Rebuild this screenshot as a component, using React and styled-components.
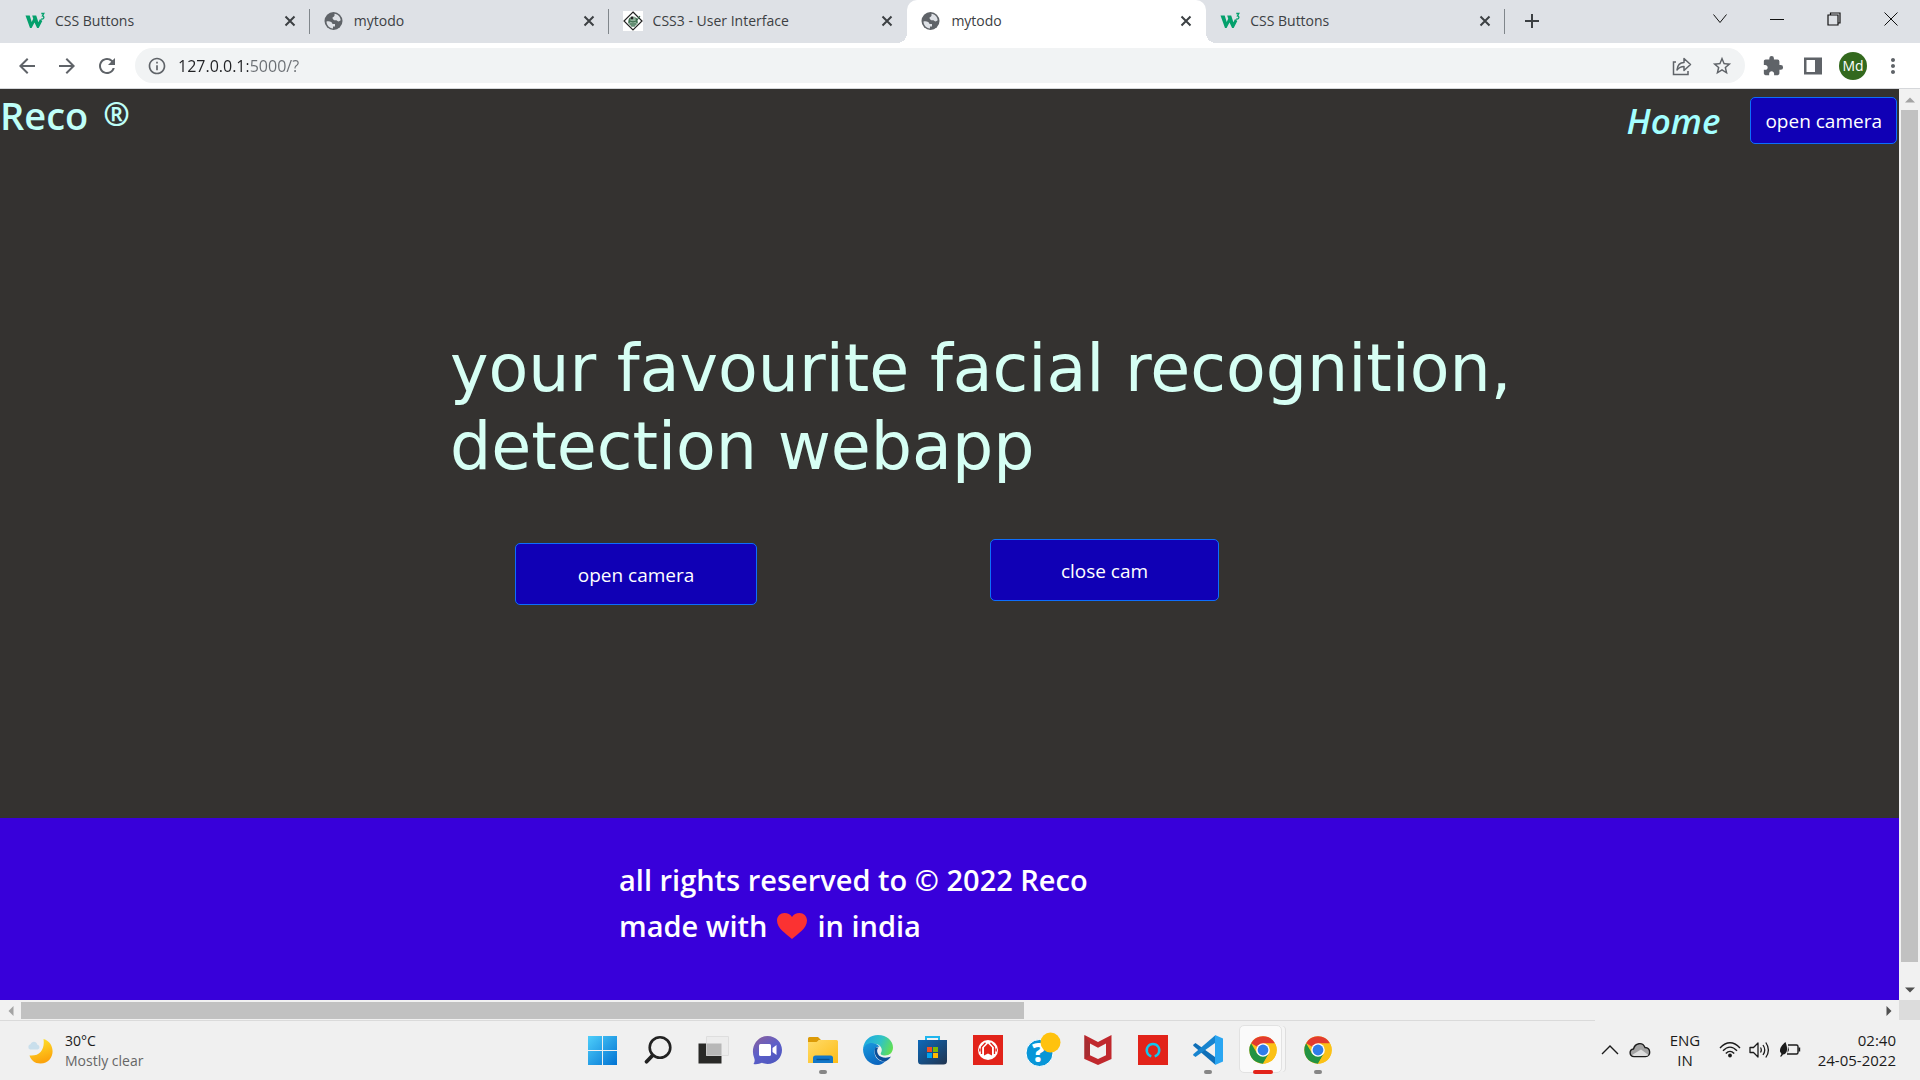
import React from "react";
import styled, { createGlobalStyle, css } from "styled-components";
import {
  MdArrowBack,
  MdArrowForward,
  MdRefresh,
  MdInfoOutline,
  MdStarBorder,
  MdExtension,
  MdMoreVert,
} from "react-icons/md";

const GlobalStyle = createGlobalStyle`
  *, *::before, *::after { box-sizing: border-box; }
  body { margin: 0; font-family: "Open Sans", "Noto Sans", sans-serif; }
  button, input { font: inherit; }
  svg { display: block; flex: none; }
`;

const Screen = styled.div`
  min-height: 100vh;
  display: flex;
  flex-direction: column;
  background: #fff;
`;

const iconButton = css`
  display: flex;
  align-items: center;
  justify-content: center;
  padding: 0;
  border: 0;
  background: transparent;
  color: inherit;
`;

/* ---------- tab strip ---------- */

const TabStrip = styled.header`
  display: flex;
  height: 43px;
  background: #dee1e6;
  color: #3c4043;
`;

const TabList = styled.div`
  display: flex;
  flex: 0 1 1505px;
  padding-left: 11px;
`;

const Tab = styled.div`
  position: relative;
  flex: 1 1 0;
  min-width: 0;
  display: flex;
  align-items: center;
  gap: 10px;
  padding: 0 10px 2px 14px;
  background: ${(p) => (p.$active ? "#fff" : "transparent")};
  border-radius: 10px 10px 0 0;

  ${(p) =>
    p.$divider &&
    css`
      &::after {
        content: "";
        position: absolute;
        right: 0;
        top: 9px;
        width: 1px;
        height: 25px;
        background: #80868b;
      }
    `}

  ${(p) =>
    p.$active &&
    css`
      &::before,
      &::after {
        content: "";
        position: absolute;
        bottom: 0;
        width: 10px;
        height: 10px;
      }
      &::before {
        left: -10px;
        background: radial-gradient(circle at 0 0, transparent 10px, #fff 10px);
      }
      &::after {
        right: -10px;
        background: radial-gradient(circle at 100% 0, transparent 10px, #fff 10px);
      }
    `}
`;

const TabTitle = styled.span`
  flex: 1;
  overflow: hidden;
  white-space: nowrap;
  font-size: 14px;
  line-height: 20px;
`;

const TabClose = styled.button`
  ${iconButton}
  width: 20px;
  height: 20px;
`;

const NewTab = styled.button`
  ${iconButton}
  width: 54px;
  height: 42px;
`;

const WindowControls = styled.div`
  display: flex;
  height: 37px;
  margin-left: auto;
  padding-right: 1px;
  color: #111;
`;

const WindowButton = styled.button`
  ${iconButton}
  width: 57px;
`;

/* ---------- toolbar ---------- */

const Toolbar = styled.div`
  display: flex;
  align-items: center;
  height: 46px;
  padding: 0 7px;
  background: #fff;
  border-bottom: 1px solid #d5d7da;
  color: #5f6368;
`;

const ToolButton = styled.button`
  ${iconButton}
  width: 40px;
  height: 36px;
`;

const AddressBar = styled.form`
  flex: 1;
  display: flex;
  align-items: center;
  height: 35px;
  margin: 0 8px;
  padding: 0 3px 0 12px;
  border-radius: 18px;
  background: #f1f3f4;
`;

const AddressInput = styled.input`
  flex: 1;
  min-width: 0;
  height: 28px;
  margin-left: 11px;
  padding: 0;
  border: 0;
  outline: 0;
  font-size: 16px;
  color: transparent;
  background: linear-gradient(90deg, #202124 70px, #6a6e73 70px);
  background-clip: text;
  -webkit-background-clip: text;
`;

const Avatar = styled.span`
  display: grid;
  place-items: center;
  width: 28px;
  height: 28px;
  border-radius: 50%;
  background: #33691e;
  color: #fff;
  font-size: 14px;
`;

/* ---------- web page ---------- */

const Viewport = styled.div`
  flex: 1;
  display: grid;
  grid-template-columns: minmax(0, 1fr) 21px;
  grid-template-rows: 1fr 20px;
`;

const Page = styled.main`
  display: flex;
  flex-direction: column;
  background: #343230;
`;

const SiteNav = styled.nav`
  display: flex;
  justify-content: space-between;
  align-items: flex-start;
  height: 56px;
  padding-right: 2px;
`;

const Brand = styled.h1`
  margin: 0;
  font-size: 38px;
  line-height: 52px;
  font-weight: 600;
  color: #bffff8;
  white-space: pre;

  sup {
    font-size: 32px;
    font-weight: 700;
    line-height: 0;
    vertical-align: 4px;
    margin-left: 15px;
  }
`;

const NavLinks = styled.div`
  display: flex;
  align-items: center;
  gap: 30px;
  padding-top: 8px;
`;

const HomeLink = styled.a`
  font-size: 35px;
  line-height: 44px;
  font-weight: 600;
  font-style: italic;
  color: #a3ffff;
  text-decoration: none;
`;

const CameraButton = styled.button`
  border: 1px solid #0d6efd;
  border-radius: 5px;
  background: #1000b5;
  color: #fff;
  font-size: 19px;
  line-height: 30px;
  padding: ${(p) => (p.$large ? "16px 0 14px" : "8px 14px 7px")};
  width: ${(p) => (p.$large ? p.$width : "auto")};
  margin-top: ${(p) => (p.$lowered ? "4px" : "0")};
`;

const Hero = styled.section`
  flex: 1;
  padding: 185px 0 0 450px;
`;

const HeroTitle = styled.h2`
  margin: 0;
  max-width: 1200px;
  font-family: "DejaVu Sans", sans-serif;
  font-size: 65px;
  line-height: 78px;
  font-weight: 400;
  color: #d6fff4;
`;

const HeroActions = styled.div`
  display: flex;
  align-items: flex-start;
  gap: 233px;
  padding: 53px 0 0 65px;
`;

const Footer = styled.footer`
  padding: 39px 0 51px 619px;
  background: #3800da;
  color: #fff;
  font-size: 29px;
  line-height: 46px;
  font-weight: 600;
`;

const FooterLine = styled.p`
  display: flex;
  align-items: center;
  gap: 10px;
  margin: 0;
`;

/* ---------- scrollbars ---------- */

const ScrollTrack = styled.div`
  display: flex;
  flex-direction: ${(p) => (p.$vertical ? "column" : "row")};
  align-items: center;
  justify-content: space-between;
  padding: ${(p) => (p.$vertical ? "0 2px" : "2px 0 1px")};
  background: #f1f1f1;
`;

const ScrollThumb = styled.div`
  background: #c1c1c1;
  ${(p) =>
    p.$vertical
      ? css`
          width: 17px;
          flex: 0 0 98%;
        `
      : css`
          height: 17px;
          flex: 0 0 54%;
        `}
`;

const ScrollRail = styled.div`
  flex: 1;
  align-self: stretch;
  display: flex;
  flex-direction: ${(p) => (p.$vertical ? "column" : "row")};
`;

const ScrollArrow = styled.button`
  ${iconButton}
  width: 21px;
  height: ${(p) => (p.$vertical ? "21px" : "17px")};
  color: ${(p) => (p.$idle ? "#a3a3a3" : "#505050")};
`;

const ScrollCorner = styled.div`
  background: #dcdcdc;
`;

/* ---------- taskbar ---------- */

const Taskbar = styled.footer`
  display: grid;
  grid-template-columns: 1fr auto 1fr;
  align-items: center;
  height: 60px;
  background: linear-gradient(#dadada, #dadada) no-repeat 0 0 / calc(100% - 325px) 1px, #f0f0f0;
  color: #1b1b1b;
  font-size: 15px;
  line-height: 20px;
`;

const Weather = styled.button`
  ${iconButton}
  justify-self: start;
  gap: 11px;
  padding: 2px 0 0 26px;
  text-align: left;
  font-size: 14px;
`;

const Stack = styled.span`
  display: flex;
  flex-direction: column;
  text-align: ${(p) => p.$align || "left"};
`;

const Muted = styled.span`
  color: #666;
`;

const Apps = styled.div`
  display: flex;
`;

const AppButton = styled.button`
  ${iconButton}
  position: relative;
  width: 55px;
  height: 60px;

  ${(p) =>
    p.$active &&
    css`
      &::before {
        content: "";
        position: absolute;
        inset: 5px 8px 7px 4px;
        border: 1px solid #e2e2e2;
        border-radius: 5px;
        background: #fafafa;
        box-shadow: 4px 0 0 -1px #f5f5f5, 5px 0 0 -1px #dedede;
      }
    `}

  ${(p) =>
    p.$running &&
    css`
      &::after {
        content: "";
        position: absolute;
        bottom: 6px;
        left: 50%;
        width: ${p.$active ? "20px" : "8px"};
        height: 4px;
        border-radius: 2px;
        transform: translateX(-50%);
        background: ${p.$active ? "#e2231a" : "#868686"};
      }
    `}

  svg {
    position: relative;
    overflow: visible;
  }
`;

const Tray = styled.div`
  justify-self: end;
  display: flex;
  align-items: center;
  padding-right: 24px;
`;

const TrayButton = styled.button`
  ${iconButton}
  width: ${(p) => p.$width || "30px"};
  height: 48px;
  text-align: center;
`;

const Clock = styled.button`
  ${iconButton}
  justify-content: flex-end;
  width: 91px;
`;

/* ---------- drawings ---------- */

const CloseIcon = () => (
  <svg width="12" height="12" viewBox="0 0 12 12" fill="none" stroke="currentColor" strokeWidth="2">
    <path d="M1.500 1.500l9 9M10.500 1.500l-9 9" />
  </svg>
);

const PlusIcon = () => (
  <svg width="16" height="16" viewBox="0 0 16 16" fill="none" stroke="currentColor" strokeWidth="2">
    <path d="M8 1v14M1 8h14" />
  </svg>
);

const W3Icon = () => (
  <svg width="20" height="20" viewBox="0 0 20 20">
    <path d="M0.500 4.500h4.200l2 6.500 1.500-3.300-1-3.200h4l2.200 6.800 1.600-3.400 2.300 2-3.600 7.100h-1.600L9.500 11.400 6.600 17H5z" fill="#04a06c" />
    <path d="M16.300 2.500h2.500l-1.400 2.400c2.400.4 1.800 3.800-1.300 3.100" fill="none" stroke="#04a06c" strokeWidth="1.300" />
  </svg>
);

const GlobeIcon = () => (
  <svg width="20" height="20" viewBox="0 0 20 20">
    <circle cx="9.500" cy="10" r="9" fill="#5f6368" />
    <path d="M2.500 10.500C6 10 8 11 8.500 13h2.500v2.500H9V17.500c-4-.5-6.500-3.500-6.500-7zM10.500 2.800c3.500.4 6 3.200 6.200 6.500-1.500 1.500-3 1.500-4.200 0-2.500.3-4-.7-4-2.800 1-.5 1.600-1 2-1.700z" fill="#dee1e6" />
  </svg>
);

const DiamondIcon = () => (
  <svg width="20" height="20" viewBox="0 0 20 20">
    <path fill="#fff" d="M0 0h20v20H0z" />
    <path d="M10 1l9 9-9 9-9-9z" fill="#fff" stroke="#222" strokeWidth="1.200" />
    <circle cx="10" cy="10.500" r="5" fill="#8fb09a" />
    <path d="M6 9c2 2.500 6 2.500 8 0l3-4M7 13h6M7 7l-1 5M13 7l1 5M8 15h4" fill="none" stroke="#3b6b4d" strokeWidth="1.200" />
    <circle cx="9" cy="7" r="1.400" fill="#222" />
  </svg>
);

const ShareIcon = () => (
  <svg width="22" height="22" viewBox="0 0 22 22" fill="none" stroke="#5f6368" strokeWidth="1.500">
    <path d="M5 7H2.500v12.500h14.500V16" />
    <path d="M6 15c.5-5 3-7.500 7-7.500V3.500l6.500 6-6.500 6V11.500c-3 0-5 1-7 3.500z" strokeLinejoin="round" />
  </svg>
);

const SidePanelIcon = () => (
  <svg width="20" height="20" viewBox="0 0 20 20">
    <path d="M1 1.500h18v17H1zM3.500 4v12H12V4z" fillRule="evenodd" fill="#5f6368" />
  </svg>
);

const Triangle = ({ turn }) => (
  <svg width="10" height="10" viewBox="0 0 10 10">
    <path d="M0 7.500h10L5 2.500z" fill="currentColor" transform={`rotate(${turn} 5 5)`} />
  </svg>
);

const HeartIcon = () => (
  <svg width="30" height="28" viewBox="0 0 30 28" role="img" aria-label="love">
    <path d="M15 27C9 21.500 0 16.500 0 8.500 0 4 3.500 1 7.500 1c3.300 0 6 1.300 7.500 4 1.500-2.700 4.200-4 7.500-4C26.500 1 30 4 30 8.500 30 16.500 21 21.500 15 27z" fill="#fb3232" />
  </svg>
);

const MoonIcon = () => (
  <svg width="28" height="28" viewBox="0 0 28 28">
    <defs>
      <linearGradient id="moon" x1="0" y1="0" x2="0.300" y2="1">
        <stop offset="0" stopColor="#ffe92e" />
        <stop offset="1" stopColor="#fba40c" />
      </linearGradient>
    </defs>
    <path d="M17.500 2C31 6 29 26.500 14.500 26.500c-6 0-9.500-3.500-11-8C14 19.500 19 12.500 17.500 2z" fill="url(#moon)" />
    <path d="M4 12.500a2.800 2.800 0 0 1 .5-5.300c1-3.600 6.300-3.400 6.800.5 3 .5 2.700 4.800 0 4.800z" fill="#c9dfec" />
  </svg>
);

const WindowsIcon = () => (
  <svg width="30" height="30" viewBox="0 0 30 30">
    <defs>
      <linearGradient id="win" gradientUnits="userSpaceOnUse" x1="0" y1="0" x2="30" y2="30">
        <stop offset="0" stopColor="#4fd0fb" />
        <stop offset="1" stopColor="#0071d2" />
      </linearGradient>
    </defs>
    <path d="M0 1h14v14H0zM15 1h14v14H15zM0 16h14v14H0zM15 16h14v14H15z" fill="url(#win)" />
  </svg>
);

const SearchIcon = () => (
  <svg width="30" height="30" viewBox="0 0 30 30" fill="none" stroke="#222" strokeLinecap="round">
    <circle cx="17" cy="12.500" r="10.300" strokeWidth="2.600" />
    <path d="M9.500 20.500l-6 6.200" strokeWidth="3.800" />
  </svg>
);

const TaskViewIcon = () => (
  <svg width="32" height="30" viewBox="0 0 32 30">
    <path d="M1.500 8.500h23v20h-23z" fill="#292927" />
    <path d="M9.500 1.500h22v19h-22z" fill="#ececec" stroke="#dedede" />
    <path d="M9.500 8.500h15v12h-15z" fill="#b7b7b7" />
  </svg>
);

const ChatIcon = () => (
  <svg width="30" height="30" viewBox="0 0 30 30">
    <defs>
      <linearGradient id="chat" x1="0" y1="0" x2="0.600" y2="1">
        <stop offset="0" stopColor="#8f6099" />
        <stop offset="0.550" stopColor="#5d5fc9" />
        <stop offset="1" stopColor="#5058c0" />
      </linearGradient>
    </defs>
    <path d="M14.500 1C23 1 29 7.500 29 15s-6 14-14.500 14c-2 0-4-.5-5.500-1.200C6.500 29 3.500 29.500.5 29c1.300-2 1.500-3.500.7-6C-3 13 3.500 1 14.500 1z" fill="url(#chat)" />
    <rect x="6" y="9" width="12" height="12" rx="1.500" fill="#fff" />
    <path d="M19.500 13l4-3v10l-4-3z" fill="#fff" />
  </svg>
);

const FolderIcon = () => (
  <svg width="30" height="30" viewBox="0 0 30 30">
    <defs>
      <linearGradient id="folder" x1="0" y1="0" x2="1" y2="1">
        <stop offset="0" stopColor="#ffdb69" />
        <stop offset="1" stopColor="#fdbc16" />
      </linearGradient>
    </defs>
    <path d="M0 3.500Q0 2 1.500 2h8.500l3 3h-2L8 9H0z" fill="#dc9a07" />
    <path d="M0 7h8.500l3-2H28.500Q30 5 30 6.500V28H0z" fill="url(#folder)" />
    <path d="M5 28v-5q0-2.500 2.500-2.500h15Q25 20.500 25 23v5z" fill="#1277c8" />
    <path d="M8.500 24.500h13" stroke="#07508f" strokeWidth="1.400" />
  </svg>
);

const EdgeIcon = () => (
  <svg width="30" height="30" viewBox="0 0 30 30">
    <defs>
      <linearGradient id="edgeTop" x1="0" y1="0.300" x2="1" y2="0.600">
        <stop offset="0" stopColor="#1ca9e3" />
        <stop offset="0.550" stopColor="#31c3c4" />
        <stop offset="1" stopColor="#62e052" />
      </linearGradient>
      <linearGradient id="edgeSide" x1="0" y1="0" x2="0.500" y2="1">
        <stop offset="0" stopColor="#199bdf" />
        <stop offset="1" stopColor="#0b66bf" />
      </linearGradient>
    </defs>
    <path d="M0 14C1 5 7 0 15 0c9 0 15 6 15 12.500 0 5-3.500 8-8 8-3.500 0-5-1.200-4-2.700 2.500-4-1-9-7-9C6 8.800 2 10.500 0 14z" fill="url(#edgeTop)" />
    <path d="M0 14C2 8.500 8 6.500 13 9c2 1 3 2 3.500 3-2.500-1-5 1-5 5 0 6.500 6 10.500 11 9-2.500 2.500-5 4-7.500 4C6.500 30 0 23 0 14z" fill="url(#edgeSide)" />
    <path d="M12.500 12.500C9.500 18 14 26.500 22 26.500c2-.5 5-3 6-5-4 2-11 1.500-13-2.500-1.500-3-1-5 .5-6.500z" fill="#0c4f99" />
  </svg>
);

const StoreIcon = () => (
  <svg width="30" height="30" viewBox="0 0 30 30">
    <defs>
      <linearGradient id="bag" x1="0" y1="0" x2="1" y2="1">
        <stop offset="0" stopColor="#0c69ba" />
        <stop offset="1" stopColor="#21344f" />
      </linearGradient>
    </defs>
    <path d="M8 6V2h13v4" fill="none" stroke="#1fb6ee" strokeWidth="2" />
    <path d="M0 5h29v21q0 3.500-3.500 3.500H3.500Q0 29.500 0 26z" fill="url(#bag)" />
    <path d="M9 12h5v5h-5z" fill="#f25022" />
    <path d="M15 12h5v5h-5z" fill="#7fba00" />
    <path d="M9 18h5v5h-5z" fill="#00a4ef" />
    <path d="M15 18h5v5h-5z" fill="#ffb900" />
  </svg>
);

const SupportIcon = () => (
  <svg width="30" height="30" viewBox="0 0 30 30">
    <path fill="#e2231a" d="M0 0h30v30H0z" />
    <circle cx="15" cy="15" r="10" fill="#fff" />
    <path d="M11 20.500V12.500L15 8.500l4 4v8l-4-2z" fill="#e2231a" />
    <path d="M8.500 19v-7L12.500 7.800M21.500 19v-7L17.500 7.800M6.800 16.500v-3M23.200 16.500v-3" fill="none" stroke="#e2231a" strokeWidth="1.300" />
  </svg>
);

const HelpIcon = () => (
  <svg width="36" height="42" viewBox="0 -3 36 42">
    <circle cx="14.500" cy="21" r="13.500" fill="#0896d8" stroke="#fff" />
    <text x="13.500" y="30" textAnchor="middle" fontFamily="Open Sans, sans-serif" fontWeight="800" fontSize="26" fill="#fff">?</text>
    <circle cx="25.500" cy="10.500" r="10" fill="#ffc20e" />
  </svg>
);

const McAfeeIcon = () => (
  <svg width="28" height="30" viewBox="0 0 28 30">
    <path d="M.5 0L14 7 27.500 0v24L14 30 .5 24zM6 8.500v11.800L14 24l8-3.700V8.500l-8 4.200z" fill="#c0282d" fillRule="evenodd" />
    <path d="M.5 0L6 8.500v11.800L.5 24z" fill="#a72c31" />
  </svg>
);

const AlexaIcon = () => (
  <svg width="30" height="30" viewBox="0 0 30 30">
    <path fill="#e2231a" d="M0 0h30v30H0z" />
    <path d="M13.300 21.300a6.300 6.300 0 1 1 3.400 0" fill="none" stroke="#12c6ee" strokeWidth="2.400" />
  </svg>
);

const CodeIcon = () => (
  <svg width="30" height="30" viewBox="0 0 30 30">
    <path d="M2.500 8L22 22v7.500L.5 11q-.8-.8 0-1.500z" fill="#0f6fb8" />
    <path d="M2.500 22L22 8V.5L.5 19q-.8.800 0 1.500z" fill="#1784cf" />
    <path d="M22 0l8 3.500v23L22 30z" fill="#2aa6f2" />
  </svg>
);

const ChromeIcon = () => (
  <svg width="30" height="30" viewBox="0 0 30 30">
    <circle cx="15" cy="15" r="13.700" fill="#fbc116" />
    <path d="M15 15L3.100 8.200A13.700 13.700 0 0 1 26.900 8.200z" fill="#e33b2e" />
    <path d="M3.100 8.200A13.700 13.700 0 0 0 15 28.700l6-10.400-12-.1z" fill="#229342" />
    <path d="M15 8.200h11.900A13.700 13.700 0 0 1 15 28.700l5.900-10.300z" fill="#fbc116" />
    <circle cx="15" cy="15" r="6.800" fill="#fff" />
    <circle cx="15" cy="15" r="5.400" fill="#2f7de9" />
  </svg>
);

const ChevronUpIcon = () => (
  <svg width="18" height="10" viewBox="0 0 18 10" fill="none" stroke="#1b1b1b" strokeWidth="1.400">
    <path d="M1 9l8-8 8 8" />
  </svg>
);

const CloudIcon = () => (
  <svg width="22" height="16" viewBox="0 0 22 16">
    <path d="M5 14.500c-5 0-5.200-6.800-.5-7.500C6 1 13.500-.5 16 5.500c6 .2 6.300 9 .5 9z" fill="#a3a3a3" stroke="#1b1b1b" strokeWidth="1.400" />
    <path d="M3 13L12 7.500l7.500 5.500q-1 1-3 1H5z" fill="#dedede" />
  </svg>
);

const WifiIcon = () => (
  <svg width="22" height="18" viewBox="0 0 22 18" fill="none" stroke="#1b1b1b" strokeWidth="1.400">
    <path d="M1 7Q11-3.500 21 7M4 9.800Q11 2.500 18 9.800M6.800 12.500Q11 8.200 15.200 12.500" />
    <circle cx="11" cy="14.500" r="1.200" fill="#1b1b1b" />
  </svg>
);

const SpeakerIcon = () => (
  <svg width="22" height="18" viewBox="0 0 22 18" fill="none" stroke="#1b1b1b" strokeWidth="1.300" strokeLinejoin="round">
    <path d="M1 6.500h3.500L9 2v14l-4.500-4.500H1z" />
    <path d="M11.500 6.500q1.600 2.500 0 5M14 4q3.500 5 0 10M16.800 1.500q5.200 7.500 0 15" />
  </svg>
);

const BatteryIcon = () => (
  <svg width="22" height="18" viewBox="0 0 22 18">
    <path d="M9 4h8.500Q19 4 19 5.500v6q0 1.500-1.500 1.500H8" fill="none" stroke="#1b1b1b" strokeWidth="1.400" />
    <path d="M19.500 6.500h1.700v4h-1.700z" fill="#1b1b1b" />
    <path d="M6.500 1C3 4 .8 6.500 1 10.500L2.500 13 1 15.500h1.500L4 13.500c4-.5 5.500-5 2.500-12.500zM9 5l1 4-1.500 3" fill="#1b1b1b" />
  </svg>
);

const ControlChevron = () => (
  <svg width="16" height="12" viewBox="0 0 16 12" fill="none" stroke="currentColor">
    <path d="M1.500 1.500L8 9.500l6.500-8" />
  </svg>
);

const MinimizeIcon = () => (
  <svg width="14" height="12" viewBox="0 0 14 12">
    <path d="M0 6h14v1H0z" fill="currentColor" />
  </svg>
);

const RestoreIcon = () => (
  <svg width="14" height="14" viewBox="0 0 14 14" fill="none" stroke="currentColor" strokeWidth="1.200">
    <path d="M1 3h10v10H1zM3.500 3V1H13v10h-2" />
  </svg>
);

const WindowCloseIcon = () => (
  <svg width="14" height="14" viewBox="0 0 14 14" fill="none" stroke="currentColor">
    <path d="M.5 .5l13 13M13.500 .5l-13 13" />
  </svg>
);

/* ---------- data ---------- */

const tabs = [
  { title: "CSS Buttons", Icon: W3Icon, divider: true },
  { title: "mytodo", Icon: GlobeIcon, divider: true },
  { title: "CSS3 - User Interface", Icon: DiamondIcon },
  { title: "mytodo", Icon: GlobeIcon, active: true },
  { title: "CSS Buttons", Icon: W3Icon, divider: true },
];

const apps = [
  { name: "Start", Icon: WindowsIcon },
  { name: "Search", Icon: SearchIcon },
  { name: "Task view", Icon: TaskViewIcon },
  { name: "Chat", Icon: ChatIcon },
  { name: "File Explorer", Icon: FolderIcon, running: true },
  { name: "Edge", Icon: EdgeIcon },
  { name: "Store", Icon: StoreIcon },
  { name: "Vantage", Icon: SupportIcon },
  { name: "Help", Icon: HelpIcon },
  { name: "McAfee", Icon: McAfeeIcon },
  { name: "Alexa", Icon: AlexaIcon },
  { name: "Code", Icon: CodeIcon, running: true },
  { name: "Chrome", Icon: ChromeIcon, running: true, active: true },
  { name: "Chrome profile", Icon: ChromeIcon, running: true },
];

export default function App() {
  return (
    <Screen>
      <GlobalStyle />
      <TabStrip>
        <TabList>
          {tabs.map(({ title, Icon, divider, active }, i) => (
            <Tab key={i} $divider={divider} $active={active}>
              <Icon />
              <TabTitle>{title}</TabTitle>
              <TabClose aria-label={`Close ${title}`}>
                <CloseIcon />
              </TabClose>
            </Tab>
          ))}
        </TabList>
        <NewTab aria-label="New tab">
          <PlusIcon />
        </NewTab>
        <WindowControls>
          <WindowButton aria-label="Search tabs"><ControlChevron /></WindowButton>
          <WindowButton aria-label="Minimize"><MinimizeIcon /></WindowButton>
          <WindowButton aria-label="Restore"><RestoreIcon /></WindowButton>
          <WindowButton aria-label="Close"><WindowCloseIcon /></WindowButton>
        </WindowControls>
      </TabStrip>

      <Toolbar>
        <ToolButton aria-label="Back"><MdArrowBack size={24} /></ToolButton>
        <ToolButton aria-label="Forward"><MdArrowForward size={24} /></ToolButton>
        <ToolButton aria-label="Reload"><MdRefresh size={24} /></ToolButton>
        <AddressBar onSubmit={(e) => e.preventDefault()}>
          <MdInfoOutline size={20} />
          <AddressInput aria-label="Address" defaultValue="127.0.0.1:5000/?" />
          <ToolButton type="button" aria-label="Share"><ShareIcon /></ToolButton>
          <ToolButton type="button" aria-label="Bookmark"><MdStarBorder size={22} /></ToolButton>
        </AddressBar>
        <ToolButton aria-label="Extensions"><MdExtension size={22} /></ToolButton>
        <ToolButton aria-label="Side panel"><SidePanelIcon /></ToolButton>
        <ToolButton aria-label="Profile"><Avatar>Md</Avatar></ToolButton>
        <ToolButton aria-label="Menu"><MdMoreVert size={24} /></ToolButton>
      </Toolbar>

      <Viewport>
        <Page>
          <SiteNav>
            <Brand>Reco<sup>®</sup></Brand>
            <NavLinks>
              <HomeLink href="#home">Home</HomeLink>
              <CameraButton>open camera</CameraButton>
            </NavLinks>
          </SiteNav>
          <Hero>
            <HeroTitle>your favourite facial recognition, detection webapp</HeroTitle>
            <HeroActions>
              <CameraButton $large $width="242px" $lowered>open camera</CameraButton>
              <CameraButton $large $width="229px">close cam</CameraButton>
            </HeroActions>
          </Hero>
          <Footer>
            <FooterLine>all rights reserved to © 2022 Reco</FooterLine>
            <FooterLine>
              <span>made with</span>
              <HeartIcon />
              <span>in india</span>
            </FooterLine>
          </Footer>
        </Page>
        <ScrollTrack $vertical>
          <ScrollArrow $vertical $idle aria-label="Scroll up"><Triangle turn={0} /></ScrollArrow>
          <ScrollRail $vertical><ScrollThumb $vertical /></ScrollRail>
          <ScrollArrow $vertical aria-label="Scroll down"><Triangle turn={180} /></ScrollArrow>
        </ScrollTrack>
        <ScrollTrack>
          <ScrollArrow $idle aria-label="Scroll left"><Triangle turn={270} /></ScrollArrow>
          <ScrollRail><ScrollThumb /></ScrollRail>
          <ScrollArrow aria-label="Scroll right"><Triangle turn={90} /></ScrollArrow>
        </ScrollTrack>
        <ScrollCorner />
      </Viewport>

      <Taskbar>
        <Weather>
          <MoonIcon />
          <Stack>
            <span>30°C</span>
            <Muted>Mostly clear</Muted>
          </Stack>
        </Weather>
        <Apps>
          {apps.map(({ name, Icon, running, active }) => (
            <AppButton key={name} aria-label={name} $running={running} $active={active}>
              <Icon />
            </AppButton>
          ))}
        </Apps>
        <Tray>
          <TrayButton aria-label="Show hidden icons"><ChevronUpIcon /></TrayButton>
          <TrayButton aria-label="OneDrive"><CloudIcon /></TrayButton>
          <TrayButton $width="60px"><Stack $align="center"><span>ENG</span><span>IN</span></Stack></TrayButton>
          <TrayButton aria-label="Network"><WifiIcon /></TrayButton>
          <TrayButton aria-label="Volume"><SpeakerIcon /></TrayButton>
          <TrayButton aria-label="Battery"><BatteryIcon /></TrayButton>
          <Clock><Stack $align="right"><span>02:40</span><span>24-05-2022</span></Stack></Clock>
        </Tray>
      </Taskbar>
    </Screen>
  );
}
